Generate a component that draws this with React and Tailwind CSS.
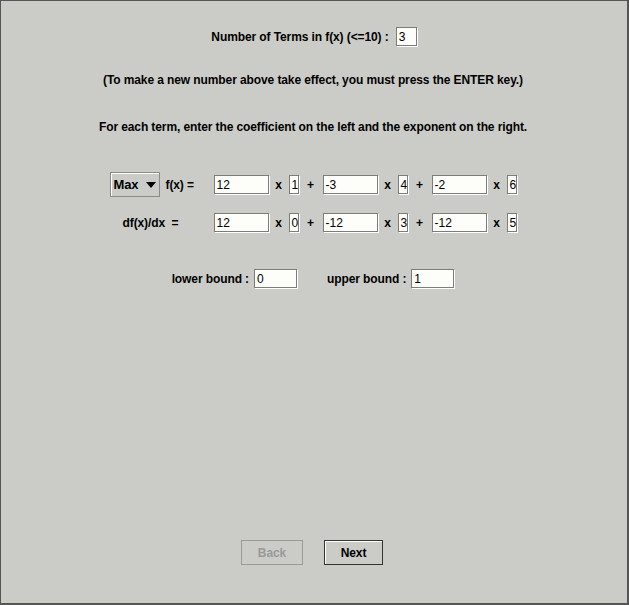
import React from "react";

const Field = ({ value, w }) => (
  <div
    className={`${w} h-[19px] bg-[#fdfdf9] border border-[#7c7c7c] shadow-[1px_1px_0_#ffffff] flex items-center pl-[2px] text-[12px] font-normal text-black leading-none overflow-hidden tracking-normal`}
  >
    {value}
  </div>
);

const TermRow = ({ label, terms }) => (
  <div className="flex items-center justify-center pr-[2px]">
    <div className="w-[104px] flex items-center">{label}</div>
    {terms.map((t, i) => (
      <div key={i} className="flex items-center">
        {i > 0 && <div className="w-[24px] text-center">+</div>}
        <Field value={t.coef} w="w-[55px]" />
        <div className="w-[20px] text-center">x</div>
        <Field value={t.exp} w="w-[10px]" />
      </div>
    ))}
  </div>
);

export default function App() {
  const fTerms = [
    { coef: "12", exp: "1" },
    { coef: "-3", exp: "4" },
    { coef: "-2", exp: "6" },
  ];
  const dTerms = [
    { coef: "12", exp: "0" },
    { coef: "-12", exp: "3" },
    { coef: "-12", exp: "5" },
  ];

  return (
    <div
      className="w-[629px] h-[605px] bg-[#cbccc8] border border-[#555555] border-r-2 border-b-2 flex flex-col text-[12px] font-bold text-black tracking-[-0.1px]"
      style={{ fontFamily: '"Liberation Sans", Arial, sans-serif' }}
    >
      <div className="mt-[26px] flex items-center justify-center gap-[7px]">
        <span>Number of Terms in f(x) (&lt;=10) :</span>
        <Field value="3" w="w-[21px]" />
      </div>

      <div className="mt-[27px] h-[14px] leading-[14px] text-center pr-[2px]">
        (To make a new number above take effect, you must press the ENTER key.)
      </div>

      <div className="mt-[33px] h-[14px] leading-[14px] text-center pr-[2px]">
        For each term, enter the coefficient on the left and the exponent on the right.
      </div>

      <div className="mt-[38px] h-[25px] flex items-center justify-center">
        <TermRow
          label={
            <>
              <div className="w-[50px] h-[25px] border border-[#8a8a8a] shadow-[inset_1px_1px_0_#ffffff] flex items-center justify-center gap-[7px] text-[13px]">
                <span>Max</span>
                <svg width="10" height="6" viewBox="0 0 10 6">
                  <path d="M0 0 H10 L5 6 Z" fill="#000" />
                </svg>
              </div>
              <span className="ml-[6px]">f(x) =</span>
            </>
          }
          terms={fTerms}
        />
      </div>

      <div className="mt-[16px]">
        <TermRow
          label={<span className="ml-[13px] whitespace-pre">df(x)/dx  =</span>}
          terms={dTerms}
        />
      </div>

      <div className="mt-[37px] flex items-center justify-center pr-[2px]">
        <span>lower bound :</span>
        <div className="ml-[5px]">
          <Field value="0" w="w-[43px]" />
        </div>
        <span className="ml-[30px]">upper bound :</span>
        <div className="ml-[5px]">
          <Field value="1" w="w-[43px]" />
        </div>
      </div>

      <div className="mt-[252px] flex items-center justify-center gap-[21px] pr-[4px]">
        <button className="w-[62px] h-[25px] border border-[#9a9a9a] text-[#9a9a9a] text-[12px] font-bold">
          Back
        </button>
        <button className="w-[59px] h-[25px] border border-[#333333] shadow-[inset_1px_1px_0_#ffffff] text-black text-[12px] font-bold">
          Next
        </button>
      </div>
    </div>
  );
}
